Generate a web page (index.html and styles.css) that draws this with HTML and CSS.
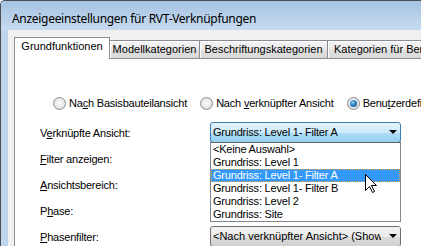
FILE: index.html
```html
<!DOCTYPE html>
<html lang="de">
<head>
    <meta charset="UTF-8">
    <title>Anzeigeeinstellungen für RVT-Verknüpfungen</title>
    <link rel="stylesheet" href="styles.css">
</head>
<body>
    <div class="window">
        <div class="titlebar">Anzeigeeinstellungen für RVT-Verknüpfungen</div>
        <div class="frame">
            <div class="client">
                <div class="tabs">
                    <div class="tab active tab-grund">Grundfunktionen</div>
                    <div class="tab tab-modell">Modellkategorien</div>
                    <div class="tab tab-beschr">Beschriftungskategorien</div>
                    <div class="tab tab-bem">Kategorien für Bemaßungen</div>
                </div>
                <div class="panel">
                    <div class="radios">
                        <label class="radio-item"><span class="radio"></span><span>Na<u>c</u>h Basisbauteilansicht</span></label>
                        <label class="radio-item"><span class="radio"></span><span>Nach <u>v</u>erknüpfter Ansicht</span></label>
                        <label class="radio-item"><span class="radio checked"></span><span>Benu<u>t</u>zerdefiniert</span></label>
                    </div>
                    <div class="form">
                        <div class="row">
                            <label class="row-label">V<u>e</u>rknüpfte Ansicht:</label>
                            <div class="combo-wrap">
                                <div class="combo hot">Grundriss: Level 1- Filter A<span class="arrow"></span></div>
                                <ul class="droplist">
                                    <li>&lt;Keine Auswahl&gt;</li>
                                    <li>Grundriss: Level 1</li>
                                    <li class="selected">Grundriss: Level 1- Filter A</li>
                                    <li>Grundriss: Level 1- Filter B</li>
                                    <li>Grundriss: Level 2</li>
                                    <li>Grundriss: Site</li>
                                </ul>
                            </div>
                        </div>
                        <div class="row">
                            <label class="row-label"><u>F</u>ilter anzeigen:</label>
                            <div class="combo"><span class="arrow"></span></div>
                        </div>
                        <div class="row">
                            <label class="row-label"><u>A</u>nsichtsbereich:</label>
                            <div class="combo"><span class="arrow"></span></div>
                        </div>
                        <div class="row">
                            <label class="row-label">P<u>h</u>ase:</label>
                            <div class="combo"><span class="arrow"></span></div>
                        </div>
                        <div class="row">
                            <label class="row-label"><u>P</u>hasenfilter:</label>
                            <div class="combo wide-text">&lt;Nach verknüpfter Ansicht&gt; (Show All)<span class="arrow"></span></div>
                        </div>
                    </div>
                </div>
            </div>
        </div>
        <svg class="cursor" width="13" height="20" viewBox="0 0 13 20">
            <path d="M0.5 0.5 V16.5 L4.5 12.5 L7.5 18.5 L9.5 17.5 L6.5 11.5 L11.5 11.5 Z" fill="#fff" stroke="#000" stroke-width="1"/>
        </svg>
    </div>
</body>
</html>
```

FILE: styles.css
```css
body {
    margin: 0;
    padding: 0;
    width: 421px;
    height: 246px;
    overflow: hidden;
    background: #fff;
    font-family: "Liberation Sans", Arial, sans-serif;
    font-size: 11px;
    color: #000;
}
u {
    text-underline-offset: 1px;
}
.window {
    position: relative;
    width: 480px;
    height: 260px;
    display: flex;
    flex-direction: column;
    border-top: 1px solid #4a4f55;
    border-left: 1px solid #4a4f55;
    border-top-left-radius: 5px;
    background: #bed5ec;
    overflow: hidden;
}
.titlebar {
    height: 29px;
    box-sizing: border-box;
    padding: 10px 0 0 11px;
    line-height: 16px;
    font-family: "Noto Sans", sans-serif;
    font-size: 12px;
    letter-spacing: -0.3px;
    background: linear-gradient(to bottom, #a6c3e3, #c7dbef);
}
.frame {
    flex: 1;
    display: flex;
    padding-left: 7px;
}
.client {
    flex: 1;
    background: #f0f0f0;
    padding: 7px 0 0 6px;
    display: flex;
    flex-direction: column;
}
.tabs {
    display: flex;
    align-items: flex-end;
    height: 21px;
}
.tab {
    box-sizing: border-box;
    height: 18px;
    line-height: 17px;
    text-align: center;
    white-space: nowrap;
    overflow: hidden;
    border: 1px solid #898c95;
    border-bottom: none;
    margin-left: -1px;
    background: linear-gradient(to bottom, #f4f4f4, #e9e9e9 50%, #dfdfdf 51%, #d9d9d9);
    box-shadow: inset 1px 1px 0 #fff;
}
.tab.active {
    height: 22px;
    margin-bottom: -1px;
    margin-left: 0;
    background: #fff;
    box-shadow: none;
    position: relative;
    z-index: 1;
}
.tab-grund { width: 96px; }
.tab-modell { width: 91px; }
.tab-beschr { width: 129px; }
.tab-bem { width: 150px; text-align: left; padding-left: 6px; }
.panel {
    flex: 1;
    background: #fff;
    border-top: 1px solid #898c95;
    border-left: 1px solid #898c95;
    padding-top: 36px;
    letter-spacing: -0.2px;
}
.radios {
    display: flex;
    align-items: center;
    height: 16px;
    padding-left: 38px;
    margin-bottom: 8px;
    white-space: nowrap;
}
.radio-item {
    display: flex;
    align-items: center;
    margin-right: 13px;
}
.radio {
    position: relative;
    box-sizing: border-box;
    width: 13px;
    height: 13px;
    margin-right: 3px;
    border-radius: 50%;
    border: 1px solid #8a8e92;
    background: radial-gradient(circle at 50% 45%, #fdfdfd 0, #e6e6e6 55%, #cfd1d3 100%);
}
.radio.checked::after {
    content: "";
    position: absolute;
    left: 2px;
    top: 2px;
    width: 7px;
    height: 7px;
    border-radius: 50%;
    background: radial-gradient(circle at 40% 35%, #8fd0f5 0, #2a7cc0 50%, #104a86 100%);
}
.form {
    padding-left: 25px;
}
.row {
    display: flex;
    align-items: center;
    height: 26px;
}
.row-label {
    width: 170px;
    padding-top: 2px;
    line-height: 13px;
}
.combo-wrap {
    position: relative;
}
.combo {
    position: relative;
    box-sizing: border-box;
    width: 191px;
    height: 21px;
    line-height: 19px;
    padding-left: 2px;
    white-space: nowrap;
    overflow: hidden;
    border: 1px solid #707070;
    border-radius: 3px;
    background: linear-gradient(to bottom, #f2f2f2, #ebebeb 50%, #dddddd 51%, #cfcfcf);
}
.combo.wide-text {
    letter-spacing: 0;
}
.combo.hot {
    border-color: #3c7fb1;
    background: linear-gradient(to bottom, #e3f3fc, #cdeafb 50%, #b0ddf8 51%, #95cdef);
}
.arrow {
    position: absolute;
    right: 0;
    top: 0;
    bottom: 0;
    width: 19px;
    background: linear-gradient(to bottom, #f2f2f2, #ebebeb 50%, #dddddd 51%, #cfcfcf);
}
.arrow::after {
    content: "";
    position: absolute;
    left: 8px;
    top: 7px;
    border-left: 4px solid transparent;
    border-right: 4px solid transparent;
    border-top: 4px solid #000;
}
.combo.hot .arrow {
    background: none;
}
.droplist {
    position: absolute;
    left: 0;
    top: 20px;
    z-index: 5;
    box-sizing: border-box;
    width: 191px;
    margin: 0;
    padding: 0;
    list-style: none;
    background: #fff;
    border: 1px solid #828790;
    border-top-color: #646464;
}
.droplist li {
    box-sizing: border-box;
    height: 13px;
    line-height: 13px;
    padding-left: 2px;
    white-space: nowrap;
}
.droplist li.selected {
    background: #3399ff;
    color: #fff;
    outline: 1px dotted #f0a050;
    outline-offset: -1px;
}
.cursor {
    position: absolute;
    left: 364px;
    top: 173px;
    z-index: 10;
}
```
